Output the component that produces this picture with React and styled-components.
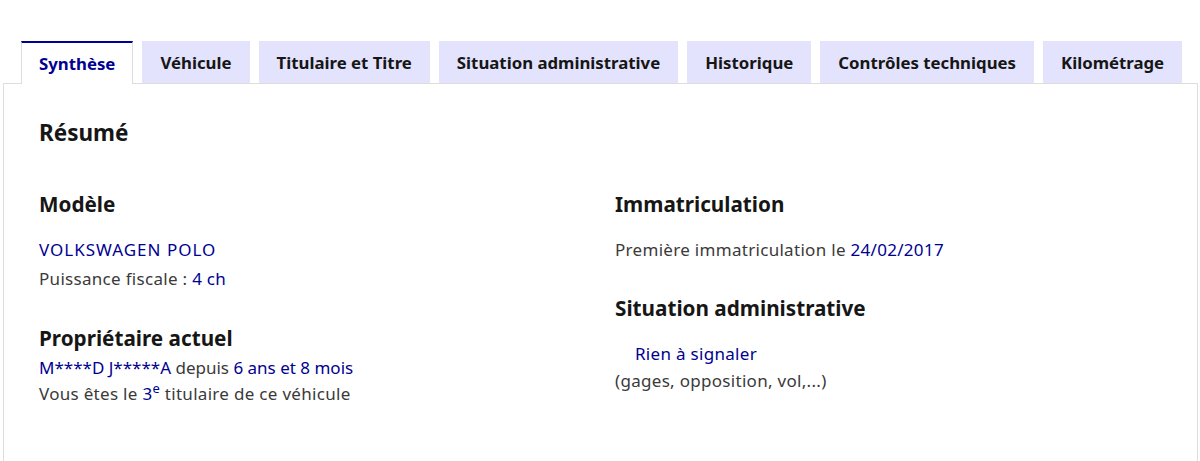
import React from "react";
import styled, { createGlobalStyle } from "styled-components";

const GlobalStyle = createGlobalStyle`
  body {
    margin: 0;
    background: #fff;
    font-family: "Noto Sans", "Liberation Sans", sans-serif;
    color: #3a3a3a;
  }
`;

const tabs = [
  "Synthèse",
  "Véhicule",
  "Titulaire et Titre",
  "Situation administrative",
  "Historique",
  "Contrôles techniques",
  "Kilométrage",
];

const App = () => {
  return (
    <Page>
      <GlobalStyle />
      <TabList>
        {tabs.map((t, i) => (
          <Tab key={t} $active={i === 0}>
            {t}
          </Tab>
        ))}
      </TabList>
      <Panel>
        <Title>Résumé</Title>
        <Grid>
          <Column>
            <Block>
              <Heading $mb="17px">Modèle</Heading>
              <Line $spacing="1px">
                <Blue>VOLKSWAGEN POLO</Blue>
              </Line>
              <Line>
                Puissance fiscale : <Blue>4 ch</Blue>
              </Line>
            </Block>
            <Block $mt="31px">
              <Heading $mb="1px">Propriétaire actuel</Heading>
              <Line $spacing="0">
                <Blue>M****D J*****A</Blue> depuis <Blue>6 ans et 8 mois</Blue>
              </Line>
              <Line $mt="-3px">
                Vous êtes le <Blue>3<Sup>e</Sup></Blue> titulaire de ce véhicule
              </Line>
            </Block>
          </Column>
          <Column>
            <Block>
              <Heading $mb="17px">Immatriculation</Heading>
              <Line>
                Première immatriculation le <Blue>24/02/2017</Blue>
              </Line>
            </Block>
            <Block $mt="30px">
              <Heading $mb="17px">Situation administrative</Heading>
              <Line $indent>
                <Blue>Rien à signaler</Blue>
              </Line>
              <Line $mt="-2px">(gages, opposition, vol,...)</Line>
            </Block>
          </Column>
        </Grid>
      </Panel>
    </Page>
  );
};

const Page = styled.div`
  padding: 41px 2px 0 3px;
  height: 461px;
  box-sizing: border-box;
  overflow: hidden;
`;

const TabList = styled.div`
  display: flex;
  gap: 9px;
  padding-left: 18px;
  position: relative;
  z-index: 1;
`;

const Tab = styled.div`
  flex-shrink: 0;
  white-space: nowrap;
  box-sizing: border-box;
  height: ${(p) => (p.$active ? "43px" : "42px")};
  margin-bottom: ${(p) => (p.$active ? "-1px" : "0")};
  padding: 0 ${(p) => (p.$active ? "17px" : "18px")} 0;
  display: flex;
  align-items: center;
  font-size: 16.8px;
  font-weight: 700;
  color: ${(p) => (p.$active ? "#000091" : "#161616")};
  background: ${(p) => (p.$active ? "#fff" : "#e3e3fd")};
  border-top: ${(p) => (p.$active ? "2px solid #000091" : "none")};
  border-left: ${(p) => (p.$active ? "1px solid #ddd" : "none")};
  border-right: ${(p) => (p.$active ? "1px solid #ddd" : "none")};
`;

const Panel = styled.div`
  border: 1px solid #ddd;
  padding: 33px 35px 60px;
  min-height: 400px;
`;

const Title = styled.h2`
  margin: 0;
  font-size: 22.5px;
  line-height: 32px;
  font-weight: 700;
  color: #161616;
`;

const Grid = styled.div`
  display: grid;
  grid-template-columns: 576px 1fr;
  margin-top: 41px;
`;

const Column = styled.div`
  display: flex;
  flex-direction: column;
`;

const Block = styled.div`
  margin-top: ${(p) => p.$mt || "0"};
`;

const Heading = styled.h3`
  margin: 0 0 ${(p) => p.$mb || "0"};
  font-size: 20.7px;
  line-height: 28px;
  font-weight: 700;
  color: #161616;
`;

const Line = styled.p`
  margin: ${(p) => p.$mt || "0"} 0 0;
  font-size: 17px;
  line-height: 29px;
  letter-spacing: ${(p) => p.$spacing || "0.3px"};
  padding-left: ${(p) => (p.$indent ? "20px" : "0")};
`;

const Blue = styled.span`
  color: #000091;
`;

const Sup = styled.sup`
  font-size: 13px;
  line-height: 0;
`;

export default App;
